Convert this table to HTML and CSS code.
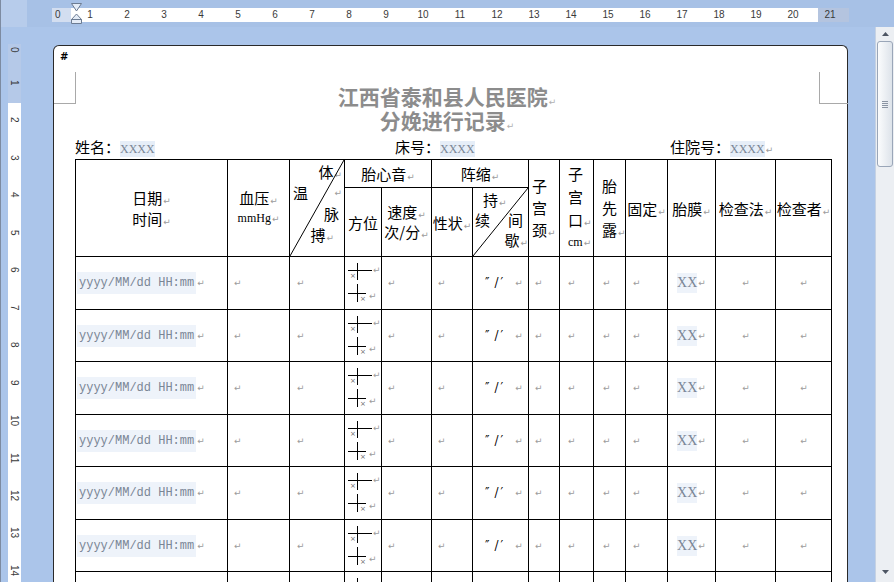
FILE: index.html
```html
<!DOCTYPE html>
<html lang="zh-CN">
<head>
<meta charset="utf-8">
<title>分娩进行记录</title>
<link rel="stylesheet" href="styles.css">
</head>
<body>
<div class="window">
  <div class="hband">
    <div class="hstrip">
      <span class="z">0</span><span>1</span><span>2</span><span>3</span><span>4</span><span>5</span><span>6</span><span>7</span><span>8</span><span>9</span><span>10</span><span>11</span><span>12</span><span>13</span><span>14</span><span>15</span><span>16</span><span>17</span><span>18</span><span>19</span><span>20</span><span>21</span>
    </div>
    <svg class="indent" width="11" height="21" viewBox="0 0 11 21"><path d="M0.5 0.5H10.5L5.5 8Z" fill="#e4ecf7" stroke="#6c7c93"/><path d="M5.5 11L10.5 16.5H0.5Z M0.5 16.5H10.5V20.5H0.5Z" fill="#e4ecf7" stroke="#6c7c93"/></svg>
  </div>

  <div class="vband">
    <div class="vstrip">
      <span class="z">0</span><span>1</span><span>2</span><span>3</span><span>4</span><span>5</span><span>6</span><span>7</span><span>8</span><span>9</span><span>10</span><span>11</span><span>12</span><span>13</span><span>14</span>
    </div>
  </div>

  <div class="doc">
    <div class="page">
      <div class="hash">#</div>
      <div class="title">
        <div>江西省泰和县人民医院<span class="ret">↵</span></div>
        <div>分娩进行记录<span class="ret">↵</span></div>
      </div>
      <div class="info">
        <div>姓名：<span class="fld">XXXX</span></div>
        <div>床号：<span class="fld">XXXX</span></div>
        <div>住院号：<span class="fld">XXXX</span><span class="ret">↵</span></div>
      </div>

      <div class="grid">
        <div class="c h g-date"><div>日期<span class="ret">↵</span></div><div>时间<span class="ret">↵</span></div></div>
        <div class="c h g-bp"><div>血压<span class="ret">↵</span></div><div class="lat">mmHg<span class="ret">↵</span></div></div>
        <div class="c vital g-vital">
          <div class="l1">体<span class="ret">↵</span></div>
          <div class="l2"><span>温</span><span class="ret">↵</span></div>
          <div class="l3">脉</div>
          <div class="l4">搏<span class="ret">↵</span></div>
          <svg class="diag" viewBox="0 0 100 100" preserveAspectRatio="none"><line x1="100" y1="0" x2="0" y2="100" stroke="#000" stroke-width="1" vector-effect="non-scaling-stroke"/></svg>
        </div>
        <div class="c h g-fhs"><div>胎心音<span class="ret">↵</span></div></div>
        <div class="c h g-con"><div>阵缩<span class="ret">↵</span></div></div>
        <div class="c h stack g-cx"><div>子</div><div>宫</div><div>颈<span class="ret">↵</span></div></div>
        <div class="c h stack os g-os"><div>子</div><div>宫</div><div>口<span class="ret">↵</span></div><div class="lat">cm<span class="ret">↵</span></div></div>
        <div class="c h stack pres g-pr"><div>胎</div><div>先</div><div>露<span class="ret">↵</span></div></div>
        <div class="c h g-fix"><div>固定<span class="ret">↵</span></div></div>
        <div class="c h g-mem"><div>胎膜<span class="ret">↵</span></div></div>
        <div class="c h g-meth"><div>检查法<span class="ret">↵</span></div></div>
        <div class="c h g-exam"><div>检查者<span class="ret">↵</span></div></div>
        <div class="c h g-pos"><div>方位</div></div>
        <div class="c h tight g-spd"><div>速度<span class="ret">↵</span></div><div>次/分<span class="ret">↵</span></div></div>
        <div class="c h g-nat"><div>性状<span class="ret">↵</span></div></div>
        <div class="c dur g-dur">
          <div class="a">持<span class="ret">↵</span></div>
          <div class="b"><span>续</span><span>间</span></div>
          <div class="e">歇<span class="ret">↵</span></div>
          <svg class="diag" viewBox="0 0 100 100" preserveAspectRatio="none"><line x1="100" y1="0" x2="0" y2="100" stroke="#000" stroke-width="1" vector-effect="non-scaling-stroke"/></svg>
        </div>

        <!-- row 1 -->
        <div class="c d"><span class="mono">yyyy/MM/dd HH:mm</span><span class="ret">↵</span></div>
        <div class="c d"><span class="ret">↵</span></div>
        <div class="c d p6"><span class="ret">↵</span></div>
        <div class="c d fp"><svg width="36" height="51" viewBox="0 0 36 51"><path d="M3 13.5H27M12.5 6V23M3 36.5H21M12.5 27V45" stroke="#000" fill="none"/><text x="5" y="21" class="sx">×</text><text x="15" y="44" class="sx">×</text><text x="28" y="16" class="sr">↵</text><text x="24" y="42" class="sr">↵</text></svg></div>
        <div class="c d"><span class="ret">↵</span></div>
        <div class="c d"><span class="ret">↵</span></div>
        <div class="c d sec"><span>″</span><span class="sl">/′</span><span class="ret r8">↵</span></div>
        <div class="c d"><span class="ret">↵</span></div>
        <div class="c d p7"><span class="ret">↵</span></div>
        <div class="c d p8"><span class="ret">↵</span></div>
        <div class="c d p6"><span class="ret">↵</span></div>
        <div class="c d ctr"><span class="xx">XX</span><span class="ret">↵</span></div>
        <div class="c d ctr"><span class="ret">↵</span></div>
        <div class="c d ctr"><span class="ret">↵</span></div>
        <!-- row 2 -->
        <div class="c d"><span class="mono">yyyy/MM/dd HH:mm</span><span class="ret">↵</span></div>
        <div class="c d"><span class="ret">↵</span></div>
        <div class="c d p6"><span class="ret">↵</span></div>
        <div class="c d fp"><svg width="36" height="51" viewBox="0 0 36 51"><path d="M3 13.5H27M12.5 6V23M3 36.5H21M12.5 27V45" stroke="#000" fill="none"/><text x="5" y="21" class="sx">×</text><text x="15" y="44" class="sx">×</text><text x="28" y="16" class="sr">↵</text><text x="24" y="42" class="sr">↵</text></svg></div>
        <div class="c d"><span class="ret">↵</span></div>
        <div class="c d"><span class="ret">↵</span></div>
        <div class="c d sec"><span>″</span><span class="sl">/′</span><span class="ret r8">↵</span></div>
        <div class="c d"><span class="ret">↵</span></div>
        <div class="c d p7"><span class="ret">↵</span></div>
        <div class="c d p8"><span class="ret">↵</span></div>
        <div class="c d p6"><span class="ret">↵</span></div>
        <div class="c d ctr"><span class="xx">XX</span><span class="ret">↵</span></div>
        <div class="c d ctr"><span class="ret">↵</span></div>
        <div class="c d ctr"><span class="ret">↵</span></div>
        <!-- row 3 -->
        <div class="c d"><span class="mono">yyyy/MM/dd HH:mm</span><span class="ret">↵</span></div>
        <div class="c d"><span class="ret">↵</span></div>
        <div class="c d p6"><span class="ret">↵</span></div>
        <div class="c d fp"><svg width="36" height="51" viewBox="0 0 36 51"><path d="M3 13.5H27M12.5 6V23M3 36.5H21M12.5 27V45" stroke="#000" fill="none"/><text x="5" y="21" class="sx">×</text><text x="15" y="44" class="sx">×</text><text x="28" y="16" class="sr">↵</text><text x="24" y="42" class="sr">↵</text></svg></div>
        <div class="c d"><span class="ret">↵</span></div>
        <div class="c d"><span class="ret">↵</span></div>
        <div class="c d sec"><span>″</span><span class="sl">/′</span><span class="ret r8">↵</span></div>
        <div class="c d"><span class="ret">↵</span></div>
        <div class="c d p7"><span class="ret">↵</span></div>
        <div class="c d p8"><span class="ret">↵</span></div>
        <div class="c d p6"><span class="ret">↵</span></div>
        <div class="c d ctr"><span class="xx">XX</span><span class="ret">↵</span></div>
        <div class="c d ctr"><span class="ret">↵</span></div>
        <div class="c d ctr"><span class="ret">↵</span></div>
        <!-- row 4 -->
        <div class="c d"><span class="mono">yyyy/MM/dd HH:mm</span><span class="ret">↵</span></div>
        <div class="c d"><span class="ret">↵</span></div>
        <div class="c d p6"><span class="ret">↵</span></div>
        <div class="c d fp"><svg width="36" height="51" viewBox="0 0 36 51"><path d="M3 13.5H27M12.5 6V23M3 36.5H21M12.5 27V45" stroke="#000" fill="none"/><text x="5" y="21" class="sx">×</text><text x="15" y="44" class="sx">×</text><text x="28" y="16" class="sr">↵</text><text x="24" y="42" class="sr">↵</text></svg></div>
        <div class="c d"><span class="ret">↵</span></div>
        <div class="c d"><span class="ret">↵</span></div>
        <div class="c d sec"><span>″</span><span class="sl">/′</span><span class="ret r8">↵</span></div>
        <div class="c d"><span class="ret">↵</span></div>
        <div class="c d p7"><span class="ret">↵</span></div>
        <div class="c d p8"><span class="ret">↵</span></div>
        <div class="c d p6"><span class="ret">↵</span></div>
        <div class="c d ctr"><span class="xx">XX</span><span class="ret">↵</span></div>
        <div class="c d ctr"><span class="ret">↵</span></div>
        <div class="c d ctr"><span class="ret">↵</span></div>
        <!-- row 5 -->
        <div class="c d"><span class="mono">yyyy/MM/dd HH:mm</span><span class="ret">↵</span></div>
        <div class="c d"><span class="ret">↵</span></div>
        <div class="c d p6"><span class="ret">↵</span></div>
        <div class="c d fp"><svg width="36" height="51" viewBox="0 0 36 51"><path d="M3 13.5H27M12.5 6V23M3 36.5H21M12.5 27V45" stroke="#000" fill="none"/><text x="5" y="21" class="sx">×</text><text x="15" y="44" class="sx">×</text><text x="28" y="16" class="sr">↵</text><text x="24" y="42" class="sr">↵</text></svg></div>
        <div class="c d"><span class="ret">↵</span></div>
        <div class="c d"><span class="ret">↵</span></div>
        <div class="c d sec"><span>″</span><span class="sl">/′</span><span class="ret r8">↵</span></div>
        <div class="c d"><span class="ret">↵</span></div>
        <div class="c d p7"><span class="ret">↵</span></div>
        <div class="c d p8"><span class="ret">↵</span></div>
        <div class="c d p6"><span class="ret">↵</span></div>
        <div class="c d ctr"><span class="xx">XX</span><span class="ret">↵</span></div>
        <div class="c d ctr"><span class="ret">↵</span></div>
        <div class="c d ctr"><span class="ret">↵</span></div>
        <!-- row 6 -->
        <div class="c d"><span class="mono">yyyy/MM/dd HH:mm</span><span class="ret">↵</span></div>
        <div class="c d"><span class="ret">↵</span></div>
        <div class="c d p6"><span class="ret">↵</span></div>
        <div class="c d fp"><svg width="36" height="51" viewBox="0 0 36 51"><path d="M3 13.5H27M12.5 6V23M3 36.5H21M12.5 27V45" stroke="#000" fill="none"/><text x="5" y="21" class="sx">×</text><text x="15" y="44" class="sx">×</text><text x="28" y="16" class="sr">↵</text><text x="24" y="42" class="sr">↵</text></svg></div>
        <div class="c d"><span class="ret">↵</span></div>
        <div class="c d"><span class="ret">↵</span></div>
        <div class="c d sec"><span>″</span><span class="sl">/′</span><span class="ret r8">↵</span></div>
        <div class="c d"><span class="ret">↵</span></div>
        <div class="c d p7"><span class="ret">↵</span></div>
        <div class="c d p8"><span class="ret">↵</span></div>
        <div class="c d p6"><span class="ret">↵</span></div>
        <div class="c d ctr"><span class="xx">XX</span><span class="ret">↵</span></div>
        <div class="c d ctr"><span class="ret">↵</span></div>
        <div class="c d ctr"><span class="ret">↵</span></div>
        <!-- row 7 -->
        <div class="c d"><span class="mono">yyyy/MM/dd HH:mm</span><span class="ret">↵</span></div>
        <div class="c d"><span class="ret">↵</span></div>
        <div class="c d p6"><span class="ret">↵</span></div>
        <div class="c d fp"><svg width="36" height="51" viewBox="0 0 36 51"><path d="M3 13.5H27M12.5 6V23M3 36.5H21M12.5 27V45" stroke="#000" fill="none"/><text x="5" y="21" class="sx">×</text><text x="15" y="44" class="sx">×</text><text x="28" y="16" class="sr">↵</text><text x="24" y="42" class="sr">↵</text></svg></div>
        <div class="c d"><span class="ret">↵</span></div>
        <div class="c d"><span class="ret">↵</span></div>
        <div class="c d sec"><span>″</span><span class="sl">/′</span><span class="ret r8">↵</span></div>
        <div class="c d"><span class="ret">↵</span></div>
        <div class="c d p7"><span class="ret">↵</span></div>
        <div class="c d p8"><span class="ret">↵</span></div>
        <div class="c d p6"><span class="ret">↵</span></div>
        <div class="c d ctr"><span class="xx">XX</span><span class="ret">↵</span></div>
        <div class="c d ctr"><span class="ret">↵</span></div>
        <div class="c d ctr"><span class="ret">↵</span></div>
      </div>
    </div>
  </div>

  <div class="vscroll">
    <div class="sb-btn"><svg width="7" height="4" viewBox="0 0 7 4"><path d="M0 4L3.5 0L7 4Z" fill="#4d5563"/></svg></div>
    <div class="sb-thumb"><svg width="6" height="7" viewBox="0 0 6 7"><path d="M0 0.5H6M0 2.5H6M0 4.5H6M0 6.5H6" stroke="#8a94a3"/></svg></div>
    <div class="sb-track"></div>
    <div class="sb-btn sb-down"><svg width="7" height="4" viewBox="0 0 7 4"><path d="M0 0L3.5 4L7 0Z" fill="#4d5563"/></svg></div>
  </div>
</div>
</body>
</html>
```
FILE: styles.css
```css
* { box-sizing: border-box; margin: 0; padding: 0; }
html, body { width: 894px; height: 582px; overflow: hidden; }
body { font-family: "Noto Sans CJK SC", "Noto Sans", sans-serif; color: #000; background: #abc5ea; }

.window {
  width: 894px; height: 582px;
  display: grid;
  grid-template-columns: 26px 849px 19px;
  grid-template-rows: 27px 555px;
  overflow: hidden;
  background: #abc5ea;
}

/* horizontal ruler */
.hband {
  grid-column: 1 / 4; grid-row: 1;
  position: relative;
  background: linear-gradient(to right, #b7cceb 0 26px, #a7c1e6 26px);
  border-left: 1px solid #7d8ba1;
  padding: 8px 0 0 51px;
}
.hstrip {
  display: flex; width: 797px; height: 14px;
  background: linear-gradient(to right, #d3def0 0 19px, #fff 19px 766px, #b4c4df 766px);
  font: 10px/14px "Liberation Sans", sans-serif; color: #3a3a3a;
}
.hstrip span { flex: none; width: 37px; text-align: center; }
.hstrip .z { width: 19.5px; text-align: left; padding-left: 3px; }
.indent { position: absolute; left: 70px; top: 3px; }

/* vertical ruler */
.vband {
  grid-column: 1; grid-row: 2;
  border-left: 1px solid #7d8ba1;
  padding: 17px 0 0 7px;
  overflow: hidden;
}
.vstrip {
  width: 13px; height: 560px;
  background: linear-gradient(#b5c9e8 0 59px, #fff 59px);
  font: 10px "Liberation Sans", sans-serif; color: #3a3a3a;
}
.vstrip span {
  display: block; width: 13px; height: 37.5px;
  writing-mode: vertical-rl; text-align: center; line-height: 13px;
}
.vstrip .z { height: 20px; text-align: start; padding-top: 3px; }

/* document */
.doc { grid-column: 2; grid-row: 2; padding: 18px 0 0 27px; overflow: hidden; }
.page {
  position: relative;
  width: 795px; height: 620px;
  background: #fff;
  border: 1px solid #2a2a2a; border-bottom: none;
  border-radius: 6px 6px 0 0;
}
.page::before, .page::after {
  content: ""; position: absolute; top: 26px; width: 21px; height: 31px;
  border: 0 solid #a9a9a9;
}
.page::before { left: 0; border-right-width: 1px; border-bottom-width: 1px; }
.page::after { left: 765px; width: 28px; border-left-width: 1px; border-bottom-width: 1px; }

.hash { font: bold 10px/12px "DejaVu Sans", sans-serif; margin: 5px 0 0 6px; }
.title {
  margin: 21px 0 0 21px; width: 756px; padding-right: 12px;
  text-align: center; font-weight: bold; font-size: 21px; line-height: 24px; color: #8c8c8c;
}
.info {
  margin: 5px 0 0 21px;
  display: grid; grid-template-columns: 320px 275px auto;
  font-size: 15px; line-height: 20px;
}
.fld {
  font-family: "Liberation Serif", serif; font-size: 12px; line-height: 0;
  color: #7a8696; background: #e6eef8; padding: 1px 0;
}
.ret {
  font-family: "DejaVu Sans", sans-serif; font-size: 9px; line-height: 0; color: #9c9c9c;
  margin-left: 1px; font-weight: normal;
}
.title .ret { color: #b0b0b0; }

/* table grid */
.grid {
  margin: 2px 0 0 21px;
  width: 757px;
  display: grid;
  grid-template-columns: 151px 61px 54px 36px 49px 40px 55px 30px 33px 31px 41px 47px 59px 55px;
  grid-template-rows: 27px 68px;
  grid-auto-rows: 52px 51px;
  gap: 1px; padding: 1px;
  background: #000;
}
.c { background: #fff; position: relative; overflow: hidden; }
.h {
  display: flex; flex-direction: column; align-items: center; justify-content: center;
  font-size: 15px; line-height: 21px; white-space: nowrap;
}
.lat { font-family: "Liberation Serif", serif; font-size: 12px; }
.tight { line-height: 20px; }

.g-date { grid-column: 1; grid-row: 1 / 3; }
.g-bp { grid-column: 2; grid-row: 1 / 3; }
.g-vital { grid-column: 3; grid-row: 1 / 3; }
.g-fhs { grid-column: 4 / 6; grid-row: 1; }
.g-con { grid-column: 6 / 8; grid-row: 1; }
.g-cx { grid-column: 8; grid-row: 1 / 3; }
.g-os { grid-column: 9; grid-row: 1 / 3; }
.g-pr { grid-column: 10; grid-row: 1 / 3; }
.g-fix { grid-column: 11; grid-row: 1 / 3; }
.g-mem { grid-column: 12; grid-row: 1 / 3; }
.g-meth { grid-column: 13; grid-row: 1 / 3; }
.g-exam { grid-column: 14; grid-row: 1 / 3; }
.g-pos { grid-column: 4; grid-row: 2; }
.g-spd { grid-column: 5; grid-row: 2; }
.g-nat { grid-column: 6; grid-row: 2; }
.g-dur { grid-column: 7; grid-row: 2; }

.stack { align-items: flex-start; padding-left: 3px; line-height: 22px; }
.stack.os { padding-left: 8px; line-height: 23px; }
.stack.pres { padding-left: 8px; }

.vital { display: flex; flex-direction: column; padding-top: 1px; font-size: 15px; line-height: 21px; white-space: nowrap; }
.vital .l1 { text-align: right; padding-right: 2px; }
.vital .l2 { display: flex; justify-content: space-between; align-items: center; padding: 0 2px 0 3px; }
.vital .l3 { text-align: right; padding-right: 5px; }
.vital .l4 { text-align: right; padding-right: 10px; }

.dur { display: flex; flex-direction: column; padding-top: 2px; font-size: 15px; line-height: 20px; white-space: nowrap; }
.dur .a { padding-left: 10px; }
.dur .b { display: flex; justify-content: space-between; padding: 0 5px 0 2px; }
.dur .e { text-align: right; }

.diag { position: absolute; left: 0; top: 0; width: 100%; height: 100%; }

/* data cells */
.d { display: flex; align-items: center; padding-left: 5px; }
.d.p6 { padding-left: 6px; }
.d.p7 { padding-left: 7px; }
.d.p8 { padding-left: 8px; }
.d.ctr { justify-content: center; padding-left: 0; }
.d.fp { align-items: flex-start; padding: 0; }
.d.sec { padding-left: 12px; font-family: "DejaVu Serif", serif; font-size: 12px; }
.d.sec .sl { margin-left: 5px; letter-spacing: 2px; }
.d .mono {
  font-family: "Liberation Mono", monospace; font-size: 12px; line-height: 22px;
  color: #7a8696; background: #eef3fa; padding: 0 2px; margin-left: -4px;
}
.d .xx { font-family: "Liberation Serif", serif; font-size: 14px; line-height: 20px; color: #7a8696; background: #eef3fa; }
.ret.r8 { margin-left: 10px; }
.sx { font: 7px "DejaVu Sans", sans-serif; fill: #666; }
.sr { font: 9px "DejaVu Sans", sans-serif; fill: #9c9c9c; }

/* scrollbar */
.vscroll {
  grid-column: 3; grid-row: 2;
  display: flex; flex-direction: column;
  background: #eceff3;
  border-left: 1px solid #c6d2e3;
}
.sb-btn { height: 14px; display: flex; align-items: center; justify-content: center; flex: none; }
.sb-down { height: 20px; }
.sb-thumb {
  flex: none; height: 126px; margin: 0 1px;
  border: 1px solid #9aa6b8; border-radius: 3px;
  background: linear-gradient(to right, #fbfcfd, #dde3ea);
  display: flex; align-items: center; justify-content: center;
}
.sb-track { flex: 1; }
```
